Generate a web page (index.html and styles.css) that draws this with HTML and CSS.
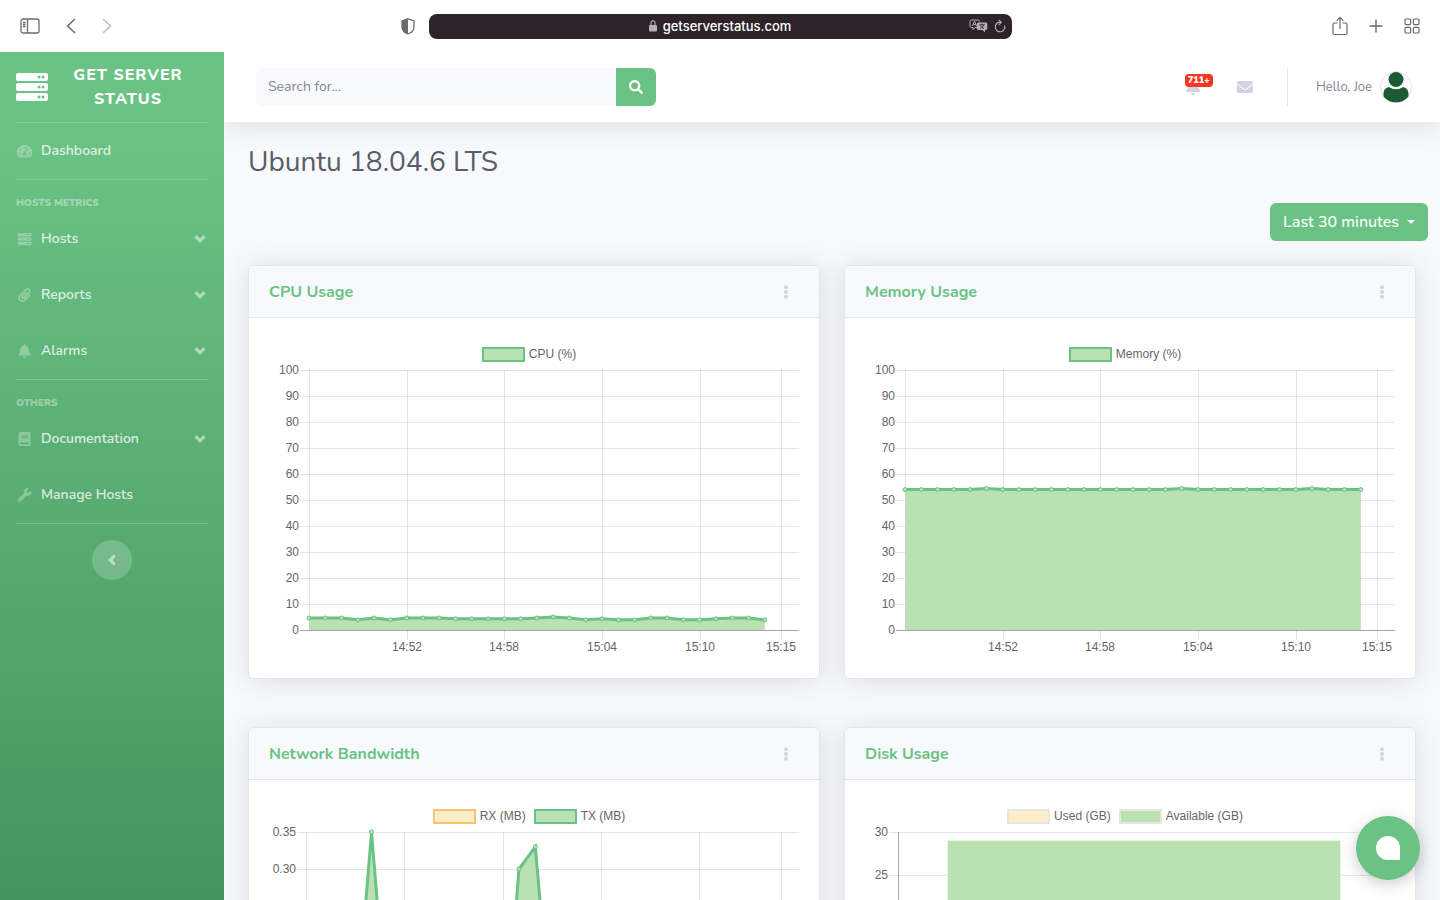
FILE: index.html
```html
<!DOCTYPE html>
<html lang="en">
<head>
    <meta charset="UTF-8">
    <meta name="viewport" content="width=device-width, initial-scale=1.0">
    <title>Get Server Status</title>
    <link rel="stylesheet" href="styles.css">
</head>
<body>
    <svg class="sprite" aria-hidden="true">
        <symbol id="i-server" viewBox="0 0 512 512"><path fill-rule="evenodd" d="M480 160H32c-17.7 0-32-14.3-32-32V64c0-17.700 14.300-32 32-32h448c17.700 0 32 14.300 32 32v64c0 17.700-14.300 32-32 32zm-48-88a24 24 0 1 0 0 48 24 24 0 0 0 0-48zm-64 0a24 24 0 1 0 0 48 24 24 0 0 0 0-48zm112 248H32c-17.700 0-32-14.300-32-32v-64c0-17.700 14.300-32 32-32h448c17.700 0 32 14.300 32 32v64c0 17.700-14.300 32-32 32zm-48-88a24 24 0 1 0 0 48 24 24 0 0 0 0-48zm-64 0a24 24 0 1 0 0 48 24 24 0 0 0 0-48zm112 248H32c-17.700 0-32-14.300-32-32v-64c0-17.700 14.300-32 32-32h448c17.700 0 32 14.300 32 32v64c0 17.700-14.300 32-32 32zm-48-88a24 24 0 1 0 0 48 24 24 0 0 0 0-48zm-64 0a24 24 0 1 0 0 48 24 24 0 0 0 0-48z"/></symbol>
        <symbol id="i-dashboard" viewBox="0 0 576 512"><path d="M288 32C128.940 32 0 160.940 0 320c0 52.800 14.250 102.260 39.060 144.800 5.610 9.620 16.300 15.200 27.440 15.200h443c11.140 0 21.830-5.580 27.440-15.200C561.750 422.260 576 372.800 576 320c0-159.060-128.940-288-288-288zm0 64c14.710 0 26.580 10.130 30.320 23.650-1.110 2.260-2.640 4.230-3.450 6.670l-9.220 27.670c-5.130 3.490-10.970 6.010-17.640 6.010-17.670 0-32-14.330-32-32S270.330 96 288 96zM96 384c-17.670 0-32-14.330-32-32s14.330-32 32-32 32 14.330 32 32-14.330 32-32 32zm48-160c-17.670 0-32-14.330-32-32s14.330-32 32-32 32 14.330 32 32-14.330 32-32 32zm246.770-72.410l-61.330 184C343.130 347.330 352 364.540 352 384c0 11.720-3.380 22.550-8.880 32H232.880c-5.500-9.450-8.880-20.280-8.880-32 0-33.940 26.500-61.430 59.900-63.590l61.340-184.010c4.170-12.560 17.730-19.450 30.360-15.170 12.570 4.190 19.350 17.790 15.170 30.360zm14.660 57.200l15.520-46.550c3.470-1.290 7.130-2.230 11.050-2.230 17.670 0 32 14.330 32 32s-14.330 32-32 32c-11.380-.010-20.890-6.280-26.570-15.220zM480 384c-17.670 0-32-14.330-32-32s14.330-32 32-32 32 14.330 32 32-14.330 32-32 32z"/></symbol>
        <symbol id="i-clip" viewBox="0 0 448 512"><path d="M43.246 466.142c-58.430-60.289-57.341-157.511 1.386-217.581L254.392 34c44.316-45.332 116.351-45.336 160.671 0 43.890 44.894 43.943 117.329 0 162.276L232.214 383.128c-29.855 30.537-78.633 30.111-107.982-.998-28.275-29.970-27.368-77.473 1.452-106.953l143.743-146.835c6.182-6.314 16.312-6.422 22.626-.241l22.861 22.379c6.315 6.182 6.422 16.312.241 22.626L171.427 319.927c-4.932 5.045-5.236 13.428-.648 18.292 4.372 4.634 11.245 4.711 15.688.165l182.849-186.851c19.613-20.062 19.613-52.725-.011-72.798-19.189-19.627-49.957-19.637-69.154 0L90.390 293.295c-34.763 35.560-35.299 93.120-1.191 128.313 34.010 35.093 88.985 35.137 123.058.286l172.060-175.999c6.177-6.319 16.307-6.433 22.626-.256l22.877 22.364c6.319 6.177 6.434 16.307.256 22.626l-172.060 175.998c-59.576 60.938-155.943 60.216-214.770-.485z"/></symbol>
        <symbol id="i-bell" viewBox="0 0 448 512"><path d="M224 512c35.320 0 63.970-28.650 63.970-64H160.030c0 35.350 28.650 64 63.970 64zm215.390-149.710c-19.320-20.760-55.470-51.990-55.470-154.290 0-77.700-54.480-139.900-127.940-155.160V32c0-17.670-14.320-32-31.980-32s-31.980 14.330-31.980 32v20.840C118.560 68.100 64.080 130.300 64.080 208c0 102.300-36.150 133.530-55.470 154.290-6 6.450-8.660 14.160-8.610 21.710.110 16.400 12.980 32 32.100 32h383.800c19.120 0 32-15.600 32.100-32 .050-7.550-2.610-15.270-8.610-21.710z"/></symbol>
        <symbol id="i-book" viewBox="0 0 448 512"><path d="M448 360V24c0-13.300-10.700-24-24-24H96C43 0 0 43 0 96v320c0 53 43 96 96 96h328c13.300 0 24-10.700 24-24v-16c0-7.500-3.500-14.300-8.900-18.700-4.200-15.400-4.200-59.300 0-74.700 5.400-4.300 8.900-11.100 8.900-18.600zM128 134c0-3.300 2.700-6 6-6h212c3.300 0 6 2.700 6 6v20c0 3.300-2.700 6-6 6H134c-3.300 0-6-2.700-6-6v-20zm0 64c0-3.300 2.700-6 6-6h212c3.300 0 6 2.700 6 6v20c0 3.300-2.700 6-6 6H134c-3.300 0-6-2.700-6-6v-20zm253.400 250H96c-17.700 0-32-14.300-32-32 0-17.600 14.400-32 32-32h285.400c-1.900 17.100-1.900 46.900 0 64z"/></symbol>
        <symbol id="i-wrench" viewBox="0 0 512 512"><path d="M507.730 109.100c-2.240-9.030-13.540-12.090-20.120-5.510l-74.360 74.360-67.880-11.310-11.310-67.880 74.360-74.360c6.620-6.620 3.430-17.900-5.660-20.160-47.380-11.740-99.550.910-136.580 37.930-39.640 39.640-50.550 97.100-34.050 147.200L18.740 402.760c-24.990 24.990-24.990 65.510 0 90.500 24.990 24.990 65.510 24.990 90.500 0l213.210-213.210c50.120 16.710 107.470 5.680 147.370-34.220 37.070-37.070 49.700-89.320 37.910-136.730zM64 472c-13.250 0-24-10.750-24-24 0-13.260 10.750-24 24-24s24 10.740 24 24c0 13.250-10.750 24-24 24z"/></symbol>
        <symbol id="i-down" viewBox="0 0 320 512"><path d="M143 352.300L7 216.300c-9.400-9.400-9.400-24.600 0-33.900l22.600-22.600c9.400-9.400 24.600-9.400 33.900 0l96.400 96.400 96.400-96.400c9.400-9.400 24.600-9.400 33.900 0l22.600 22.600c9.400 9.400 9.400 24.600 0 33.900l-136 136c-9.200 9.400-24.400 9.400-33.800 0z"/></symbol>
        <symbol id="i-left" viewBox="0 0 256 512"><path d="M31.700 239l136-136c9.400-9.400 24.600-9.400 33.900 0l22.600 22.600c9.400 9.400 9.400 24.600 0 33.900L127.900 256l96.400 96.400c9.400 9.400 9.400 24.600 0 33.900L201.700 409c-9.400 9.400-24.600 9.400-33.900 0l-136-136c-9.500-9.400-9.500-24.600-.1-34z"/></symbol>
        <symbol id="i-search" viewBox="0 0 512 512"><path d="M505 442.700L405.300 343c-4.500-4.500-10.600-7-17-7H372c27.600-35.300 44-79.700 44-128C416 93.100 322.900 0 208 0S0 93.100 0 208s93.100 208 208 208c48.300 0 92.700-16.400 128-44v16.300c0 6.400 2.500 12.500 7 17l99.700 99.700c9.400 9.400 24.600 9.400 33.900 0l28.300-28.300c9.400-9.400 9.400-24.600.1-34zM208 336c-70.700 0-128-57.200-128-128 0-70.700 57.200-128 128-128 70.700 0 128 57.200 128 128 0 70.700-57.200 128-128 128z"/></symbol>
        <symbol id="i-mail" viewBox="0 0 512 512"><path d="M502.300 190.800c3.900-3.100 9.700-.2 9.700 4.700V400c0 26.500-21.500 48-48 48H48c-26.500 0-48-21.500-48-48V195.600c0-5 5.700-7.800 9.700-4.700 22.400 17.400 52.100 39.500 154.100 113.600 21.100 15.400 56.700 47.800 92.200 47.600 35.700.3 72-32.800 92.300-47.600 102-74.100 131.600-96.300 154-113.700zM256 320c23.200.4 56.600-29.200 73.400-41.400 132.700-96.300 142.800-104.700 173.400-128.700 5.800-4.500 9.200-11.500 9.200-18.900v-19c0-26.500-21.500-48-48-48H48c-26.500 0-48 21.500-48 48v19c0 7.400 3.400 14.300 9.200 18.900 30.600 23.900 40.700 32.400 173.400 128.700 16.800 12.200 50.200 41.800 73.400 41.400z"/></symbol>
        <symbol id="i-dots" viewBox="0 0 192 512"><path d="M96 184c39.800 0 72 32.200 72 72s-32.200 72-72 72-72-32.200-72-72 32.200-72 72-72zM24 80c0 39.800 32.200 72 72 72s72-32.200 72-72S135.800 8 96 8 24 40.200 24 80zm0 352c0 39.800 32.200 72 72 72s72-32.200 72-72-32.200-72-72-72-72 32.200-72 72z"/></symbol>
    </svg>

    <!-- Browser bar -->
    <header class="browser">
        <div class="browser-left">
            <button type="button" class="tool" aria-label="Show sidebar"><svg width="20" height="16" viewBox="0 0 20 16" fill="none" stroke="currentColor" stroke-width="1.300"><rect x="1" y="1" width="18" height="14" rx="2"/><path d="M7.500 1v14M3 4.500h2.500M3 6.500h2.500M3 8.500h2.500"/></svg></button>
            <button type="button" class="tool" aria-label="Back"><svg width="10" height="16" viewBox="0 0 10 16" fill="none" stroke="currentColor" stroke-width="1.600" stroke-linecap="round" stroke-linejoin="round"><path d="M8.500 1.500L1.500 8l7 6.500"/></svg></button>
            <button type="button" class="tool tool-off" aria-label="Forward"><svg width="10" height="16" viewBox="0 0 10 16" fill="none" stroke="currentColor" stroke-width="1.600" stroke-linecap="round" stroke-linejoin="round"><path d="M1.500 1.500l7 6.500-7 6.500"/></svg></button>
            <button type="button" class="tool shield" aria-label="Privacy report"><svg width="14" height="17" viewBox="0 0 14 17"><path d="M7 .8l6 2.200v6c0 3.500-2.500 5.700-6 7-3.500-1.300-6-3.500-6-7V3z" fill="none" stroke="currentColor" stroke-width="1.300"/><path d="M7 .8v15.200c-3.500-1.300-6-3.500-6-7V3z" fill="currentColor"/></svg></button>
        </div>
        <div class="address">
            <span class="address-text">
                <svg width="8" height="12" viewBox="0 0 8 12"><path d="M2 5V3.200C2 1.800 2.800.8 4 .8s2 1 2 2.400V5" fill="none" stroke="currentColor" stroke-width="1.100"/><rect y="5" width="8" height="6.500" rx="1" fill="currentColor"/></svg>
                getserverstatus.com
            </span>
            <span class="address-tools">
                <svg width="19" height="14" viewBox="0 0 19 14"><path d="M8 8.500H6l-2 2v-2H2.500C1.500 8.500 1 8 1 7V2.500C1 1.500 1.500 1 2.500 1H9c1 0 1.500.5 1.500 1.500" fill="none" stroke="currentColor"/><path d="M3.500 7l2-5 2 5M4.200 5.500h2.600" fill="none" stroke="currentColor" stroke-width=".9"/><path d="M9.500 3.500h7c1 0 1.800.7 1.800 1.700v4c0 1-.8 1.800-1.800 1.800H16v2.500L13.500 11h-4c-1 0-1.700-.8-1.700-1.800v-4c0-1 .7-1.700 1.700-1.700z" fill="currentColor"/><path d="M10.300 5.800h5.400M13 4.600v1.200M11 9.500c2-.8 3-2 3.500-3.500M11.600 6.500c.6 1.500 1.800 2.500 3.400 3" fill="none" stroke="#2e2329" stroke-width=".9"/></svg>
                <svg width="12" height="14" viewBox="0 0 12 14" fill="none" stroke="currentColor" stroke-width="1.100"><path d="M10.600 6.500A4.800 4.800 0 1 1 6.500 3.200M4.800.8l2.500 2.500-2.500 2.500"/></svg>
            </span>
        </div>
        <div class="browser-right">
            <button type="button" class="tool" aria-label="Share"><svg width="16" height="20" viewBox="0 0 16 20" fill="none" stroke="currentColor" stroke-width="1.200" stroke-linejoin="round" stroke-linecap="round"><path d="M5 7H2.500C1.500 7 1 7.500 1 8.500V17c0 1 .5 1.500 1.500 1.500h11c1 0 1.500-.5 1.500-1.500V8.500C15 7.500 14.500 7 13.500 7H11M8 12.500V1.500M5 4.300l3-3 3 3"/></svg></button>
            <button type="button" class="tool" aria-label="New tab"><svg width="14" height="14" viewBox="0 0 14 14" fill="none" stroke="currentColor" stroke-width="1.400"><path d="M7 .5v13M.5 7h13"/></svg></button>
            <button type="button" class="tool" aria-label="Tab overview"><svg width="16" height="16" viewBox="0 0 16 16" fill="none" stroke="currentColor" stroke-width="1.200"><rect x="1" y="1" width="5.600" height="5.600" rx="1"/><rect x="9.400" y="1" width="5.600" height="5.600" rx="1"/><rect x="1" y="9.400" width="5.600" height="5.600" rx="1"/><rect x="9.400" y="9.400" width="5.600" height="5.600" rx="1"/></svg></button>
        </div>
    </header>

    <div class="wrapper">
        <!-- Sidebar -->
        <nav class="sidebar">
            <a href="#" class="brand">
                <svg class="brand-icon"><use href="#i-server"/></svg>
                <span class="brand-text">Get Server Status</span>
            </a>
            <hr class="divider">
            <a href="#" class="nav-link"><svg class="nav-icon"><use href="#i-dashboard"/></svg>Dashboard</a>
            <hr class="divider">
            <div class="nav-heading">Hosts Metrics</div>
            <a href="#" class="nav-link"><svg class="nav-icon"><use href="#i-server"/></svg>Hosts<svg class="nav-arrow"><use href="#i-down"/></svg></a>
            <a href="#" class="nav-link"><svg class="nav-icon"><use href="#i-clip"/></svg>Reports<svg class="nav-arrow"><use href="#i-down"/></svg></a>
            <a href="#" class="nav-link"><svg class="nav-icon"><use href="#i-bell"/></svg>Alarms<svg class="nav-arrow"><use href="#i-down"/></svg></a>
            <hr class="divider">
            <div class="nav-heading">Others</div>
            <a href="#" class="nav-link"><svg class="nav-icon"><use href="#i-book"/></svg>Documentation<svg class="nav-arrow"><use href="#i-down"/></svg></a>
            <a href="#" class="nav-link"><svg class="nav-icon"><use href="#i-wrench"/></svg>Manage Hosts</a>
            <hr class="divider">
            <button type="button" class="sidebar-toggle" aria-label="Collapse sidebar"><svg><use href="#i-left"/></svg></button>
        </nav>

        <div class="content">
            <!-- Topbar -->
            <div class="topbar">
                <form class="search">
                    <input type="text" class="search-input" placeholder="Search for..." aria-label="Search">
                    <button type="button" class="search-button" aria-label="Search"><svg><use href="#i-search"/></svg></button>
                </form>
                <div class="topbar-nav">
                    <a href="#" class="top-icon" aria-label="Alerts"><svg><use href="#i-bell"/></svg><span class="badge">711+</span></a>
                    <a href="#" class="top-icon" aria-label="Messages"><svg><use href="#i-mail"/></svg></a>
                    <div class="topbar-divider"></div>
                    <a href="#" class="user">Hello, Joe
                        <svg class="avatar" viewBox="0 0 32 32"><circle cx="16" cy="16" r="15.500" fill="#fff" stroke="#e3e6f0"/><circle cx="16" cy="8.500" r="7.500" fill="#1d5b34"/><path d="M9.500 16.300c1.500 1.200 4 2 6.500 2s5-.8 6.500-2c3.500 0 6 2.700 6 6.500v2.400C26 29 21.500 31.300 16 31.300S6 29 3.500 25.200v-2.400c0-3.800 2.500-6.500 6-6.500z" fill="#1d5b34"/></svg>
                    </a>
                </div>
            </div>

            <!-- Page content -->
            <main class="page">
                <h1>Ubuntu 18.04.6 LTS</h1>
                <div class="period">
                    <button type="button" class="period-button">Last 30 minutes<span class="caret"></span></button>
                </div>
                <div class="cards">
                    <section class="card">
                        <div class="card-header"><h2>CPU Usage</h2><button type="button" class="card-menu" aria-label="CPU Usage menu"><svg><use href="#i-dots"/></svg></button></div>
                        <div class="card-body">
                            <div class="legend"><span class="key key-green"></span>CPU (%)</div>
                            <svg class="chart" id="cpuChart"></svg>
                        </div>
                    </section>
                    <section class="card">
                        <div class="card-header"><h2>Memory Usage</h2><button type="button" class="card-menu" aria-label="Memory Usage menu"><svg><use href="#i-dots"/></svg></button></div>
                        <div class="card-body">
                            <div class="legend"><span class="key key-green"></span>Memory (%)</div>
                            <svg class="chart" id="memoryChart"></svg>
                        </div>
                    </section>
                    <section class="card">
                        <div class="card-header"><h2>Network Bandwidth</h2><button type="button" class="card-menu" aria-label="Network Bandwidth menu"><svg><use href="#i-dots"/></svg></button></div>
                        <div class="card-body">
                            <div class="legend"><span class="key key-yellow"></span>RX (MB)<span class="key key-green key-next"></span>TX (MB)</div>
                            <svg class="chart" id="networkChart"></svg>
                        </div>
                    </section>
                    <section class="card">
                        <div class="card-header"><h2>Disk Usage</h2><button type="button" class="card-menu" aria-label="Disk Usage menu"><svg><use href="#i-dots"/></svg></button></div>
                        <div class="card-body">
                            <div class="legend"><span class="key key-yellow key-plain"></span>Used (GB)<span class="key key-green key-plain key-next"></span>Available (GB)</div>
                            <svg class="chart" id="diskChart"></svg>
                        </div>
                    </section>
                </div>
            </main>
        </div>
    </div>

    <button type="button" class="chat" aria-label="Open chat"><span class="chat-bubble"></span></button>

    <script src="charts.js"></script>
</body>
</html>
```
FILE: styles.css
```css
* {
    box-sizing: border-box;
    margin: 0;
    padding: 0;
}

html {
    scrollbar-width: none;
}

body {
    font-family: Nunito, Lato, sans-serif;
    font-size: 16px;
    line-height: 24px;
    color: #858796;
    background-color: #fff;
}

a {
    color: inherit;
    text-decoration: none;
}

button {
    border: 0;
    background: none;
    font: inherit;
    color: inherit;
    cursor: pointer;
}

svg {
    display: block;
    flex-shrink: 0;
}

svg:not([fill]) {
    fill: currentColor;
}

.sprite {
    display: none;
}

/* Browser bar */
.browser {
    position: sticky;
    top: 0;
    z-index: 3;
    height: 52px;
    display: grid;
    grid-template-columns: 1fr minmax(0, 583px) 1fr;
    align-items: center;
    background-color: #fff;
    color: #6b6b6b;
}

.browser-left,
.browser-right {
    display: flex;
    align-items: center;
}

.browser-left {
    padding: 0 14px 0 20px;
    gap: 26px;
}

.browser-right {
    justify-content: flex-end;
    padding-right: 20px;
    gap: 21px;
}

.tool-off {
    color: #bdbdbd;
}

.shield {
    margin-left: auto;
}

.address {
    height: 25px;
    display: grid;
    grid-template-columns: 1fr auto 1fr;
    align-items: center;
    padding: 0 6px;
    border-radius: 8px;
    background-color: #2e2329;
    color: #b5b0b3;
}

.address-text {
    grid-column: 2;
    display: flex;
    align-items: center;
    gap: 6px;
    font-family: Inter, sans-serif;
    font-size: 13px;
    font-weight: 500;
    color: #fff;
}

.address-text svg {
    color: #b5b0b3;
}

.address-tools {
    display: flex;
    justify-content: flex-end;
    align-items: center;
    gap: 6px;
}

.wrapper {
    display: flex;
    align-items: flex-start;
}

/* Sidebar */
.sidebar {
    position: sticky;
    top: 52px;
    z-index: 2;
    flex: none;
    width: 224px;
    height: calc(100vh - 52px);
    background: linear-gradient(180deg, #6ac284 10%, #469460 100%);
    color: #fff;
}

.brand {
    height: 70px;
    display: flex;
    align-items: center;
    padding: 0 32px 0 16px;
    gap: 16px;
    font-weight: 800;
    letter-spacing: 1px;
    text-align: center;
    text-transform: uppercase;
}

.brand-icon {
    width: 32px;
    height: 32px;
}

.brand-text {
    flex: 1;
}

.divider {
    margin: 0 16px;
    border: 0;
    border-top: 1px solid rgba(255, 255, 255, 0.2);
}

.nav-heading {
    padding: 15px 16px 0;
    font-size: 10px;
    line-height: 16px;
    font-weight: 900;
    text-transform: uppercase;
    color: rgba(255, 255, 255, 0.4);
}

.nav-link {
    height: 56px;
    display: flex;
    align-items: center;
    padding: 0 16px;
    font-size: 14px;
    font-weight: 600;
    color: rgba(255, 255, 255, 0.8);
}

.nav-icon {
    width: 17px;
    height: 14px;
    margin-right: 8px;
    color: rgba(255, 255, 255, 0.3);
}

.nav-arrow {
    width: 16px;
    height: 16px;
    margin-left: auto;
    color: #fff;
    stroke: currentColor;
    stroke-width: 30;
    opacity: 0.5;
}

.sidebar-toggle {
    width: 40px;
    height: 40px;
    display: flex;
    align-items: center;
    justify-content: center;
    margin: 16px auto 0;
    border-radius: 50%;
    background-color: rgba(255, 255, 255, 0.2);
}

.sidebar-toggle svg {
    width: 16px;
    height: 16px;
    stroke: currentColor;
    stroke-width: 30;
    opacity: 0.5;
}

/* Topbar */
.content {
    flex: 1;
    min-width: 0;
    background-color: #f8f9fc;
}

.topbar {
    position: relative;
    z-index: 1;
    height: 70px;
    display: flex;
    align-items: center;
    justify-content: space-between;
    padding: 0 28px 0 32px;
    background-color: #fff;
    box-shadow: 0 2px 28px rgba(58, 59, 69, 0.15);
}

.search {
    display: flex;
    width: 400px;
    height: 38px;
}

.search-input {
    flex: 1;
    min-width: 0;
    padding: 0 12px;
    border: 0;
    border-radius: 6px 0 0 6px;
    background-color: #f8f9fc;
    font: inherit;
    font-size: 14px;
    color: #6e707e;
}

.search-input::placeholder {
    color: #858796;
}

.search-button {
    width: 40px;
    display: flex;
    align-items: center;
    justify-content: center;
    border-radius: 0 6px 6px 0;
    background-color: #6ac284;
    color: #fff;
}

.search-button svg {
    width: 14px;
    height: 14px;
}

.topbar-nav {
    display: flex;
    align-items: center;
    font-size: 13px;
}

.top-icon {
    position: relative;
    width: 52px;
    display: flex;
    justify-content: center;
    color: #d1d3e2;
}

.top-icon svg {
    width: 16px;
    height: 16px;
}

.badge {
    position: absolute;
    left: 18px;
    top: -5px;
    padding: 0 3px;
    border-radius: 4px;
    background-color: #fb3620;
    font-size: 9px;
    line-height: 13px;
    font-weight: 900;
    color: #fff;
}

.topbar-divider {
    height: 38px;
    margin: 0 28px 0 16px;
    border-left: 1px solid #e3e6f0;
}

.user {
    display: flex;
    align-items: center;
    gap: 8px;
}

.avatar {
    width: 32px;
    height: 32px;
}

/* Page */
.page {
    padding: 24px;
}

h1 {
    font-size: 28px;
    line-height: 32px;
    font-weight: 400;
    color: #5a5c69;
}

.period {
    display: flex;
    justify-content: flex-end;
    margin: 25px -12px 24px 0;
}

.period-button {
    height: 38px;
    display: flex;
    align-items: center;
    padding: 0 13px;
    border-radius: 6px;
    background-color: #6ac284;
    font-weight: 500;
    color: #fff;
}

.caret {
    margin-left: 8px;
    border: 4px solid transparent;
    border-top-color: #fff;
    border-bottom: 0;
}

.cards {
    display: grid;
    grid-template-columns: repeat(2, minmax(0, 1fr));
    gap: 48px 24px;
}

.card {
    border: 1px solid #e3e6f0;
    border-radius: 6px;
    background-color: #fff;
    box-shadow: 0 2px 28px rgba(58, 59, 69, 0.15);
}

.card-header {
    height: 52px;
    display: flex;
    align-items: center;
    justify-content: space-between;
    padding: 0 20px;
    border-bottom: 1px solid #e3e6f0;
    border-radius: 6px 6px 0 0;
    background-color: #f8f9fc;
}

h2 {
    font-size: 16px;
    line-height: 20px;
    font-weight: 700;
    color: #6ac284;
}

.card-menu {
    padding: 0 10px;
    color: #d1d3e2;
}

.card-menu svg {
    width: 6px;
    height: 14px;
}

.card-body {
    padding: 20px;
    font-family: "Liberation Sans", Arial, sans-serif;
    font-size: 12px;
}

.legend {
    height: 24px;
    display: flex;
    align-items: center;
    justify-content: center;
    padding: 8px 10px 0 0;
    color: #666;
}

.key {
    width: 43px;
    height: 15px;
    margin-right: 4px;
    border: 2px solid;
}

.key-next {
    margin-left: 8px;
}

.key-green {
    border-color: #6ac284;
    background-color: #bae1b1;
}

.key-yellow {
    border-color: #fbc26f;
    background-color: #fceec6;
}

.key-plain {
    border-color: #e5e5e5;
}

/* Charts */
.chart {
    width: 100%;
    height: 296px;
}

.chart text {
    fill: #666;
}

.grid {
    stroke: rgba(0, 0, 0, 0.1);
}

.zero {
    stroke: rgba(0, 0, 0, 0.35);
}

.area,
.bar {
    fill: #bae1b1;
}

.bar-used {
    fill: #fceec6;
}

.line {
    fill: none;
    stroke: #6ac284;
    stroke-width: 3;
}

.dot {
    fill: #bae1b1;
    stroke: #6ac284;
}

.rx .area {
    fill: #fceec6;
}

.rx .line,
.rx .dot {
    stroke: #fbc26f;
}

/* Chat */
.chat {
    position: fixed;
    right: 20px;
    bottom: 20px;
    z-index: 4;
    width: 64px;
    height: 64px;
    display: flex;
    align-items: center;
    justify-content: center;
    border-radius: 50%;
    background-color: #6ac284;
    box-shadow: 0 4px 16px rgba(0, 0, 0, 0.2);
}

.chat-bubble {
    width: 24px;
    height: 24px;
    border-radius: 12px 12px 0 12px;
    background-color: #fff;
}
```
FILE: charts.js
```js
const TOP = 8;
const BOTTOM = 268;
const times = { 6: '14:52', 12: '14:58', 18: '15:04', 24: '15:10', 29: '15:15' };

const cpu = [4.6, 4.6, 4.6, 3.9, 4.6, 3.9, 4.6, 4.6, 4.6, 4.3, 4.3, 4.3, 4.3, 4.3, 4.6, 5, 4.6, 3.9, 4.3, 3.9, 3.9, 4.6, 4.6, 3.9, 3.9, 4.3, 4.6, 4.6, 3.9];
const memory = cpu.map((v, i) => [5, 17, 25].includes(i) ? 54.4 : 54);
const tx = Array(29).fill(0.01);
tx[3] = 0.08;
tx[4] = 0.35;
tx[5] = 0.08;
tx[13] = 0.3;
tx[14] = 0.33;
tx[15] = 0.08;
const rx = Array(29).fill(0.01);

function line(x1, y1, x2, y2, cls) {
    return `<line class="${cls}" x1="${x1}" y1="${y1}" x2="${x2}" y2="${y2}"/>`;
}

// Horizontal lines and the labels of the value axis
function valueAxis(left, width, max, step, digits) {
    let out = '';
    for (let i = 0; i <= Math.round(max / step); i++) {
        const y = Math.round(BOTTOM - i * step / max * (BOTTOM - TOP));
        out += line(left - 9, y + 0.5, width, y + 0.5, i === 0 ? 'zero' : 'grid');
        out += `<text x="${left - 10}" y="${y + 4}" text-anchor="end">${(i * step).toFixed(digits)}</text>`;
    }
    return out;
}

function lineChart(id, left, max, step, digits, series) {
    const svg = document.getElementById(id);
    const width = svg.clientWidth;
    const gap = (width - left) / 30.1;
    let out = valueAxis(left, width, max, step, digits);

    out += line(left + 0.5, TOP, left + 0.5, BOTTOM, 'grid');
    for (const i in times) {
        const x = Math.round(left + i * gap);
        out += line(x + 0.5, TOP, x + 0.5, BOTTOM + 10, 'grid');
        out += `<text x="${x}" y="${BOTTOM + 21}" text-anchor="middle">${times[i]}</text>`;
    }

    series.forEach(s => {
        const points = s.data.map((v, i) => [left + i * gap, BOTTOM - v / max * (BOTTOM - TOP)]);
        const path = points.map(p => p.join(',')).join(' ');
        const end = points[points.length - 1][0];
        out += `<g class="${s.name}"><polygon class="area" points="${left},${BOTTOM} ${path} ${end},${BOTTOM}"/>`;
        out += `<polyline class="line" points="${path}"/>`;
        points.forEach(p => out += `<circle class="dot" cx="${p[0]}" cy="${p[1]}" r="2"/>`);
        out += '</g>';
    });
    svg.innerHTML = out;
}

function diskChart() {
    const svg = document.getElementById('diskChart');
    const width = svg.clientWidth;
    const left = 33;
    const x = left + (width - left) * 0.1;
    const barWidth = (width - left) * 0.79;
    const toY = v => BOTTOM - v / 30 * (BOTTOM - TOP);
    let out = valueAxis(left, width, 30, 5, 0);
    out += line(left + 0.5, TOP, left + 0.5, BOTTOM, 'zero');
    out += `<rect class="bar" x="${x}" y="${toY(29)}" width="${barWidth}" height="${toY(12) - toY(29)}"/>`;
    out += `<rect class="bar bar-used" x="${x}" y="${toY(12)}" width="${barWidth}" height="${toY(0) - toY(12)}"/>`;
    svg.innerHTML = out;
}

function drawCharts() {
    lineChart('cpuChart', 40, 100, 10, 0, [{ name: 'cpu', data: cpu }]);
    lineChart('memoryChart', 40, 100, 10, 0, [{ name: 'memory', data: memory }]);
    lineChart('networkChart', 37, 0.35, 0.05, 2, [{ name: 'rx', data: rx }, { name: 'tx', data: tx }]);
    diskChart();
}

window.addEventListener('resize', drawCharts);
drawCharts();
```
